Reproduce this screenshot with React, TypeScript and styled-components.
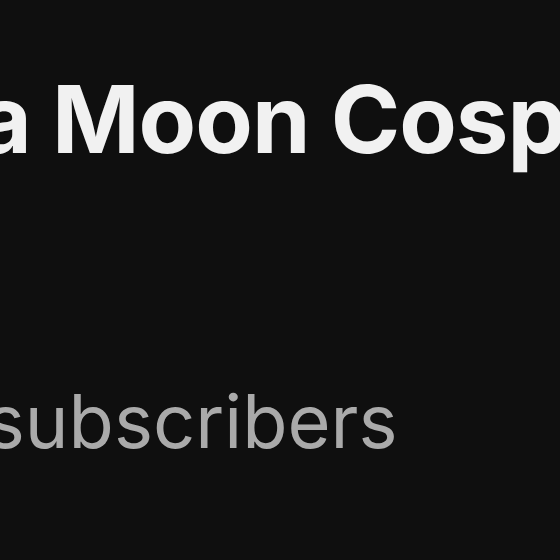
import React from 'react';
import styled, { createGlobalStyle } from 'styled-components';

const GlobalStyle = createGlobalStyle`
	html, body {
		margin: 0;
		padding: 0;
		background: #0f0f0f;
	}
`;

const Channel = styled.div`
	width: 560px;
	height: 560px;
	overflow: hidden;
	background: #0f0f0f;
	font-family: Inter, "Liberation Sans", Arial, sans-serif;
	display: flex;
	flex-direction: column;
	padding-top: 72px;
	box-sizing: border-box;
`;

const Title = styled.h1`
	margin: 0 0 0 -190px;
	font-size: 94px;
	line-height: 1;
	font-weight: 700;
	letter-spacing: -1px;
	color: #f1f1f1;
	white-space: nowrap;
`;

const Meta = styled.div`
	margin: 218px 0 0 -160px;
	font-size: 74px;
	line-height: 1;
	color: #aaaaaa;
	white-space: nowrap;
`;

const App = () => (
	<>
		<GlobalStyle />
		<Channel>
			<Title>Luna Moon Cosplay</Title>
			<Meta>12K subscribers</Meta>
		</Channel>
	</>
);

export default App;
